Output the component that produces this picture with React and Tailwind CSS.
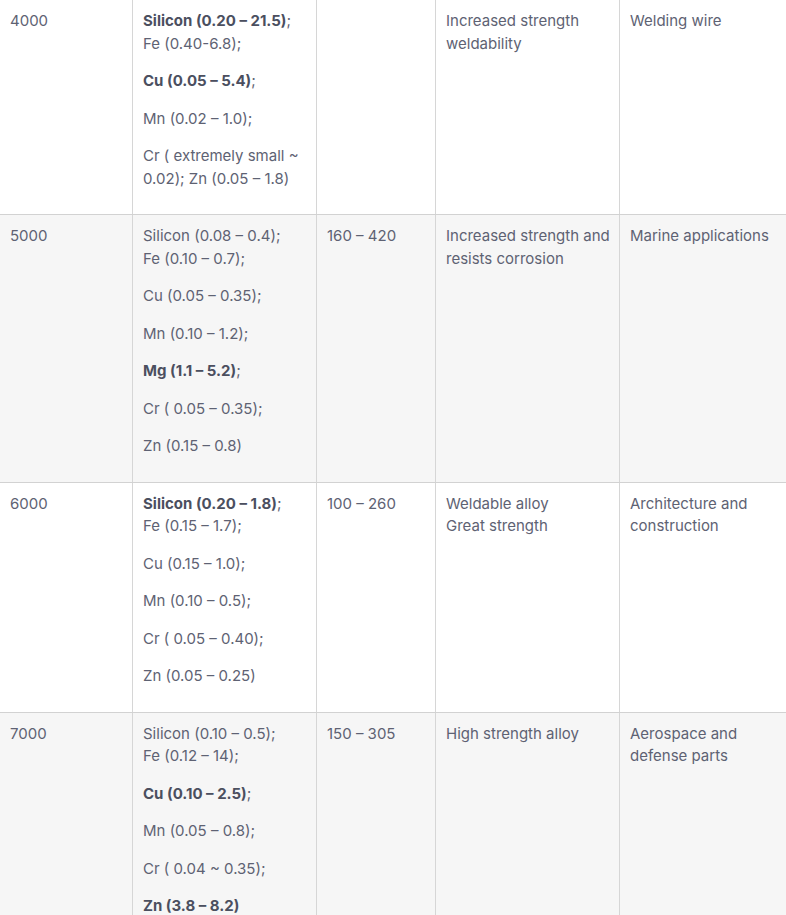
const rows = [
  {
    grade: "4000",
    comp: [
      [[{ b: "Silicon (0.20 – 21.5)" }, ";"], ["Fe (0.40-6.8);"]],
      [[{ b: "Cu (0.05 – 5.4)" }, ";"]],
      [["Mn (0.02 – 1.0);"]],
      [["Cr ( extremely small ~ 0.02); Zn (0.05 – 1.8)"]],
    ],
    tensile: "",
    props: ["Increased strength weldability"],
    uses: "Welding wire",
  },
  {
    grade: "5000",
    comp: [
      [["Silicon (0.08 – 0.4);"], ["Fe (0.10 – 0.7);"]],
      [["Cu (0.05 – 0.35);"]],
      [["Mn (0.10 – 1.2);"]],
      [[{ b: "Mg (1.1 – 5.2)" }, ";"]],
      [["Cr ( 0.05 – 0.35);"]],
      [["Zn (0.15 – 0.8)"]],
    ],
    tensile: "160 – 420",
    props: ["Increased strength and resists corrosion"],
    uses: "Marine applications",
  },
  {
    grade: "6000",
    comp: [
      [[{ b: "Silicon (0.20 – 1.8)" }, ";"], ["Fe (0.15 – 1.7);"]],
      [["Cu (0.15 – 1.0);"]],
      [["Mn (0.10 – 0.5);"]],
      [["Cr ( 0.05 – 0.40);"]],
      [["Zn (0.05 – 0.25)"]],
    ],
    tensile: "100 – 260",
    props: ["Weldable alloy", "Great strength"],
    uses: "Architecture and construction",
  },
  {
    grade: "7000",
    comp: [
      [["Silicon (0.10 – 0.5);"], ["Fe (0.12 – 14);"]],
      [[{ b: "Cu (0.10 – 2.5)" }, ";"]],
      [["Mn (0.05 – 0.8);"]],
      [["Cr ( 0.04 ~ 0.35);"]],
      [[{ b: "Zn (3.8 – 8.2)" }]],
    ],
    tensile: "150 – 305",
    props: ["High strength alloy"],
    uses: "Aerospace and defense parts",
  },
];

function Line({ parts }) {
  return parts.map((p, i) =>
    typeof p === "string" ? (
      <span key={i}>{p}</span>
    ) : (
      <strong key={i} className="font-bold text-[#4b4f5f]">
        {p.b}
      </strong>
    )
  );
}

function Cell({ children, first, tight }) {
  return (
    <div
      className={`pl-[10px] pt-[10px] pb-[9px] ${tight ? "pr-[2px]" : "pr-[10px]"} ${
        first ? "" : "border-l border-[#d6d6d6]"
      }`}
    >
      {children}
    </div>
  );
}

export default function App() {
  return (
    <div
      className="min-h-screen bg-white text-[15px] leading-[22.5px] text-[#5e6273]"
      style={{ fontFamily: "Inter, 'Noto Sans', sans-serif" }}
    >
      {rows.map((r, i) => (
        <div
          key={r.grade}
          className={`grid grid-cols-[132px_184px_119px_184px_1fr] border-b border-[#d2d2d2] ${
            i % 2 ? "bg-[#f6f6f6]" : "bg-white"
          }`}
        >
          <Cell first>
            <p className="mb-[15px]">{r.grade}</p>
          </Cell>
          <Cell>
            {r.comp.map((para, j) => (
              <p key={j} className="mb-[15px]">
                {para.map((line, k) => (
                  <span key={k}>
                    {k > 0 && <br />}
                    <Line parts={line} />
                  </span>
                ))}
              </p>
            ))}
          </Cell>
          <Cell>
            <p className="mb-[15px]">{r.tensile}</p>
          </Cell>
          <Cell tight>
            <p className="mb-[15px]">
              {r.props.map((t, k) => (
                <span key={k}>
                  {k > 0 && <br />}
                  {t}
                </span>
              ))}
            </p>
          </Cell>
          <Cell>
            <p className="mb-[15px]">{r.uses}</p>
          </Cell>
        </div>
      ))}
    </div>
  );
}
